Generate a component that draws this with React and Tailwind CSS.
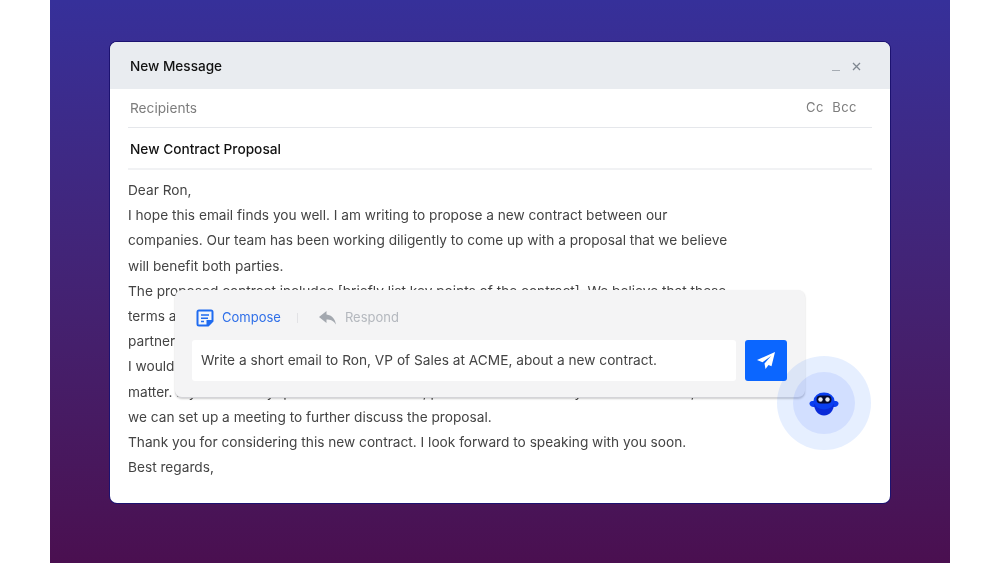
const font = { fontFamily: 'Inter, "Liberation Sans", sans-serif' }

// 信件內文（每行照原圖斷行）
const bodyLines = [
  'Dear Ron,',
  'I hope this email finds you well. I am writing to propose a new contract between our',
  'companies. Our team has been working diligently to come up with a proposal that we believe',
  'will benefit both parties.',
  'The proposed contract includes [briefly list key points of the contract]. We believe that these',
  'terms are fair and will help us build a strong and lasting business',
  'partnership between our two companies going forward from here.',
  'I would love the opportunity to discuss this with you and hear your thoughts on the',
  'matter. If you have any questions or concerns, please let me know. If you are interested,',
  'we can set up a meeting to further discuss the proposal.',
  'Thank you for considering this new contract. I look forward to speaking with you soon.',
  'Best regards,',
]

function ComposeIcon() {
  return (
    <svg width="18" height="18" viewBox="0 0 18 18" fill="none">
      <path d="M3 0.500h12a2.500 2.500 0 0 1 2.500 2.500v9.500l-5 5H3a2.500 2.500 0 0 1-2.500-2.500V3A2.500 2.500 0 0 1 3 0.500z" fill="#1f6bf0" />
      <path d="M2.500 2.500h13v8.500h-5v4.500h-8z" fill="#f2f5fb" />
      <path d="M5 6h8M5 9.300h7M5 12.500h3" stroke="#1f6bf0" strokeWidth="1.500" />
    </svg>
  )
}

function RespondIcon() {
  return (
    <svg width="17" height="14" viewBox="0 0 17 14" fill="#a3a8af">
      <path d="M7.500 0 0 6l7.500 6V8.600c4 0 7 1 9.500 5C16.200 8 13 4 7.500 3.400z" />
    </svg>
  )
}

function SendIcon() {
  return (
    <svg width="20" height="18" viewBox="0 0 20 18" fill="white">
      <path d="M19 0 1 8l5.500 2.200L15 4 8.500 11.500 9.500 17l3-4 3 1.200z" />
    </svg>
  )
}

function RobotIcon() {
  return (
    <svg width="30" height="24" viewBox="0 0 30 24">
      <path d="M0.500 11.500C0.500 9.500 2.500 9 4 9h22c1.500 0 3.500.5 3.500 2.500S27.500 15 25.500 15h-21C2.500 15 .5 13.500.5 11.500z" fill="#0a3ef0" />
      <path d="M5 12h20c0 6-4 11.500-10 11.500S5 18 5 12z" fill="#0a2bd8" />
      <ellipse cx="15" cy="9" rx="10.500" ry="8.500" fill="#0a3ef0" />
      <rect x="7.500" y="3.500" width="15" height="8" rx="4" fill="#050a30" />
      <circle cx="11.500" cy="7.500" r="2.200" fill="#e8eaf0" />
      <circle cx="18.500" cy="7.500" r="2.200" fill="#e8eaf0" />
    </svg>
  )
}

export default function App() {
  return (
    <div style={font} className="w-[1000px] h-[563px] bg-white px-[50px] overflow-hidden blur-[0.4px]">
      <div className="h-full bg-gradient-to-b from-[#36309a] to-[#4a0f50] px-[60px] pt-[42px]">
        <div className="relative h-[461px] bg-white rounded-[7px] shadow-[0_0_0_1px_#1c1270]">
          {/* 標題列 */}
          <div className="h-[47px] pt-[1px] bg-[#e9ecf0] rounded-t-[7px] flex items-center justify-between pl-[20px] pr-[29px]">
            <span className="text-[13.600px] font-medium text-[#111111]">New Message</span>
            <div className="flex items-center gap-[12px]">
              <span className="w-[8px] h-px bg-[#a6acb3] mt-[8px]" />
              <svg width="9" height="9" viewBox="0 0 9 9" stroke="#7f8790" strokeWidth="1.300">
                <path d="M1 1l7 7M8 1l-7 7" />
              </svg>
            </div>
          </div>

          <div className="px-[18px]">
            <div className="h-[39px] flex items-center justify-between px-[2px] pr-[15px] border-b border-[#e5e7eb] text-[13.700px] text-[#7d7d7d]">
              <span>Recipients</span>
              <span className="text-[13px] tracking-[0.5px]">Cc&nbsp; Bcc</span>
            </div>
            <div className="h-[42px] pt-[3px] flex items-center px-[2px] border-b-2 border-[#f1f2f4] text-[13.700px] font-medium text-[#111111]">
              New Contract Proposal
            </div>
            <div className="pt-[8px] text-[13.680px] leading-[25.200px] text-[#444444]">
              {bodyLines.map((line) => (
                <p key={line} className="whitespace-nowrap">{line}</p>
              ))}
            </div>
          </div>

          {/* 浮動輸入框 */}
          <div className="absolute left-[65px] top-[248px] w-[630px] h-[108px] bg-[#f4f4f5] rounded-[7px] border-b border-[#d4d4d8] shadow-[0_1px_2px_rgba(0,0,0,0.2)] pt-[19px] px-[17px]">
            <div className="flex items-center h-[18px] text-[13px] pl-[4px]">
              <ComposeIcon />
              <span className="ml-[8px] text-[#2f6fe8]">Compose</span>
              <span className="ml-[16px] w-px h-[10px] bg-[#e2e2e5]" />
              <span className="ml-[21px]"><RespondIcon /></span>
              <span className="ml-[9px] text-[#b4b8be]">Respond</span>
            </div>
            <div className="mt-[13px] flex gap-[9px]">
              <div className="w-[544px] h-[41px] bg-white rounded-[3px] flex items-center pl-[9px] text-[13.700px] text-[#444444]">
                Write a short email to Ron, VP of Sales at ACME, about a new contract.
              </div>
              <div className="w-[42px] h-[41px] bg-[#0b66ff] rounded-[3px] flex items-center justify-center">
                <SendIcon />
              </div>
            </div>
          </div>

          {/* 機器人按鈕 */}
          <div className="absolute left-[667px] top-[314px] w-[94px] h-[94px] rounded-full bg-[#0b66ff]/10 flex items-center justify-center">
            <div className="w-[62px] h-[62px] rounded-full bg-[#1f4dff]/10 flex items-center justify-center pt-[2px]">
              <RobotIcon />
            </div>
          </div>
        </div>
      </div>
    </div>
  )
}
